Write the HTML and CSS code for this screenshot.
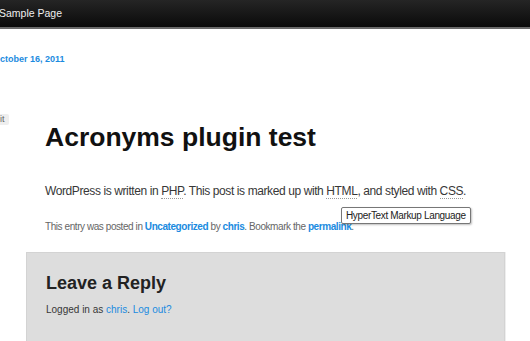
FILE: index.html
```html
<!DOCTYPE html>
<html lang="en">
<head>
  <meta charset="UTF-8" />
  <title>Acronyms plugin test</title>
  <link rel="stylesheet" href="styles.css">
</head>
<body>
  <div class="topbar">
    <a href="#" class="nav-link">Sample Page</a>
  </div>
  <div class="page">
    <div class="entry-date"><a href="#">October 16, 2011</a></div>
    <div class="edit-row"><a href="#" class="edit-link">Edit</a></div>
    <article class="post">
      <h1 class="entry-title">Acronyms plugin test</h1>
      <p class="entry-content">WordPress is written in <abbr>PHP</abbr>. This post is marked up with <abbr>HTML</abbr>, and styled with <abbr>CSS</abbr>.</p>
      <div class="entry-meta">
        This entry was posted in <a href="#">Uncategorized</a> by <a href="#">chris</a>. Bookmark the <a href="#">permalink</a>.
        <span class="tooltip">HyperText Markup Language</span>
      </div>
    </article>
    <div class="respond">
      <h3>Leave a Reply</h3>
      <p class="logged-in">Logged in as <a href="#">chris</a>. <a href="#">Log out?</a></p>
    </div>
  </div>
</body>
</html>
```
FILE: styles.css
```css
* { box-sizing: border-box; }
body {
  margin: 0;
  font-family: 'Liberation Sans', Arial, sans-serif;
  background: #fff;
  color: #373737;
  overflow: hidden;
}
a { text-decoration: none; }

/* ナビ */
.topbar {
  height: 29px;
  background: linear-gradient(#252525, #0a0a0a);
  border-bottom: 2px solid #6a6a6a;
  display: flex; align-items: center;
}
.nav-link {
  color: #eee; font-size: 10.5px;
  margin-left: -1px;
  padding-bottom: 2px;
}

.page { padding-top: 23px; }

.entry-date {
  font-size: 9px; font-weight: bold;
  line-height: 14px;
  margin-left: -7px;
}
.entry-date a { color: #1b8be0; }

.edit-row { margin-top: 42px; height: 11px; margin-left: -15px; }
.edit-link {
  display: inline-block;
  background: #eee; color: #666;
  font-size: 9px; line-height: 11px;
  padding: 0 4px; border-radius: 2px;
}

.post { padding: 0 45px; }
.entry-title {
  margin: 5px 0 0;
  font-size: 26.5px; font-weight: bold;
  color: #111; line-height: 26px;
}
.entry-content {
  margin: 31px 0 0;
  font-size: 12px; line-height: 20px;
  letter-spacing: -0.4px;
  color: #373737;
  white-space: nowrap;
}
abbr {
  text-decoration: none;
  border-bottom: 1px dotted #999;
}
.entry-meta {
  position: relative;
  margin-top: 19px;
  font-size: 10px; line-height: 14px;
  letter-spacing: -0.43px;
  color: #666;
  white-space: nowrap;
}
.entry-meta a { color: #1b8be0; font-weight: bold; }

/* ツールチップ */
.tooltip {
  position: absolute; left: 296px; top: -13px;
  background: #fff; color: #222;
  border: 1px solid #777; border-radius: 2px;
  box-shadow: 1px 1px 2px rgba(0,0,0,.25);
  font-size: 10px; line-height: 15px;
  letter-spacing: -0.35px;
  padding: 0 4px;
}

.respond {
  margin: 18px 25px 0 26px;
  background: #ddd;
  border: 1px solid #d3d3d3;
  box-shadow: 1px 0 0 #eee;
  padding: 17px 19px 40px;
}
.respond h3 {
  margin: 0;
  font-size: 18px; line-height: 26px;
  color: #222;
}
.logged-in {
  margin: 7px 0 0;
  font-size: 10px; line-height: 14px;
  color: #373737;
}
.logged-in a { color: #1b8be0; }
```
